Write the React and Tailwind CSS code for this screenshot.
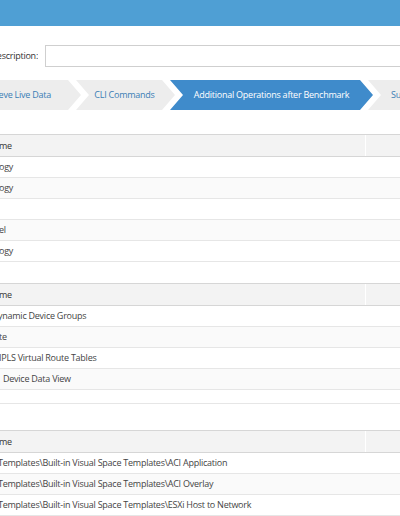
const FONT = { fontFamily: '"Open Sans", "Liberation Sans", sans-serif' };

const tables = [
  {
    rows: [
      { text: "ogy", cls: "-ml-[1px]" },
      { text: "ogy", cls: "-ml-[1px]" },
      { text: "", cls: "" },
      { text: "el", cls: "-ml-[1px]" },
      { text: "ogy", cls: "-ml-[1px]" },
    ],
    footer: false,
    gap: "mt-[24px]",
  },
  {
    rows: [
      { text: "ynamic Device Groups", cls: "-ml-[2px]" },
      { text: "te", cls: "-ml-[1px]" },
      { text: "IPLS Virtual Route Tables", cls: "-ml-[1px]" },
      { text: "Device Data View", cls: "ml-[3px]" },
    ],
    footer: true,
    gap: "mt-[21px]",
  },
  {
    rows: [
      { text: "Templates\\Built-in Visual Space Templates\\ACI Application", cls: "-ml-[2px]" },
      { text: "Templates\\Built-in Visual Space Templates\\ACI Overlay", cls: "-ml-[2px]" },
      { text: "Templates\\Built-in Visual Space Templates\\ESXi Host to Network", cls: "-ml-[2px]" },
      { text: "Templates\\Built-in Visual Space Templates\\ESXi Host to VM", cls: "-ml-[2px]" },
    ],
    footer: false,
    gap: "mt-[26px]",
  },
];

const Table = ({ table }) => (
  <div className={table.gap}>
    <div className="flex h-[23px] border-y border-[#d6d6d6] bg-[#f3f3f3] text-[#333]">
      <div className="flex w-[365px] items-center">
        <span className="-ml-[1px]">me</span>
      </div>
      <div className="flex-1 border-l border-white"></div>
    </div>
    {table.rows.map((row, i) => (
      <div
        key={i}
        className={`flex h-[21px] items-center border-b border-[#e6e6e6] text-[#444] ${
          i % 2 === 1 ? "bg-[#fafafa]" : "bg-white"
        }`}>
        <span className={`whitespace-nowrap ${row.cls}`}>{row.text}</span>
      </div>
    ))}
    {table.footer && <div className="h-[14px] border-b border-[#e6e6e6]"></div>}
  </div>
);

const Step = ({ label, active, width, className }) => (
  <div
    className={`flex h-[30px] shrink-0 items-center justify-center whitespace-nowrap [clip-path:polygon(0_0,calc(100%-13px)_0,100%_50%,calc(100%-13px)_100%,0_100%,13px_50%)] ${
      active ? "bg-[#3f8bcb] text-white" : "bg-[#ededed] text-[#3a7db5]"
    } ${width} ${className}`}>
    {label}
  </div>
);

export default function App() {
  return (
    <div
      className="h-[516px] w-[400px] overflow-hidden bg-white text-[9px] tracking-[-0.25px]"
      style={FONT}>
      <div className="h-[26px] bg-[#4f9fd4]"></div>

      <div className="mt-[19px] flex h-[22px] items-center">
        <div className="flex w-[38px] shrink-0 justify-end overflow-hidden">
          <span className="whitespace-nowrap text-[#333]">Description:</span>
        </div>
        <div className="ml-[7px] -mr-[10px] h-[22px] flex-1 border border-[#cfcfcf] bg-white"></div>
      </div>

      <div className="mt-[13px] flex">
        <Step label="Retrieve Live Data" width="w-[131px]" className="-ml-[50px]" />
        <Step label="CLI Commands" width="w-[99px]" className="-ml-[5px] pr-[2px]" />
        <Step label="Additional Operations after Benchmark" active width="w-[203px]" className="-ml-[5px]" />
        <Step label="Summary" width="w-[110px]" className="-ml-[5px] justify-start pl-[23px]" />
      </div>

      {tables.map((t, i) => (
        <Table key={i} table={t} />
      ))}
    </div>
  );
}
